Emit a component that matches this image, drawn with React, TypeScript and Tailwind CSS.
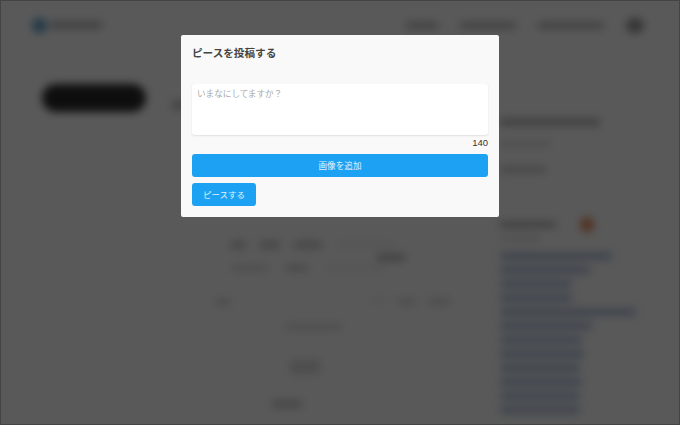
function Background() {
  return (
    <div className="absolute inset-0 flex flex-col bg-white blur-[4px]">
      <header className="flex h-[48px] items-center justify-between pl-[32px] pr-[36px] pt-[2px]">
        <div className="flex items-center gap-[3px]">
          <div className="h-[15px] w-[15px] rounded-full bg-[#5fa4cc]" />
          <div className="h-[8px] w-[52px] bg-[#bbb]" />
        </div>
        <div className="flex items-center gap-[22px]">
          <div className="h-[7px] w-[32px] bg-[#bbb]" />
          <div className="h-[7px] w-[56px] bg-[#bbb]" />
          <div className="h-[7px] w-[66px] bg-[#bbb]" />
          <div className="h-[15px] w-[18px] rounded-full bg-[#999]" />
        </div>
      </header>
      <div className="flex flex-1 overflow-hidden pl-[42px] pt-[36px]">
        <div className="w-[130px] shrink-0">
          <div className="h-[28px] w-[104px] rounded-full bg-[#2a2a2a]" />
        </div>
        <div className="w-[328px] shrink-0 pr-[20px]">
          <div className="mt-[17px] h-[8px] w-[14px] bg-[#bbb]" />
          <div className="ml-[58px] mt-[132px] flex items-center gap-[14px]">
            <div className="h-[8px] w-[16px] bg-[#ccc]" />
            <div className="h-[8px] w-[20px] bg-[#ccc]" />
            <div className="h-[8px] w-[28px] bg-[#ccc]" />
            <div className="h-[4px] w-[60px] bg-[#eee]" />
          </div>
          <div className="ml-[205px] mt-[5px] h-[7px] w-[28px] bg-[#bbb]" />
          <div className="ml-[60px] mt-[4px] flex gap-[18px]">
            <div className="h-[6px] w-[36px] bg-[#ddd]" />
            <div className="h-[6px] w-[22px] bg-[#ccc]" />
            <div className="h-[5px] w-[60px] bg-[#eee]" />
          </div>
          <div className="mt-[27px] flex justify-between pl-[44px] pr-[30px]">
            <div className="h-[8px] w-[14px] bg-[#ddd]" />
            <div className="flex gap-[12px]">
              <div className="h-[5px] w-[14px] bg-[#eee]" />
              <div className="h-[7px] w-[18px] bg-[#ddd]" />
              <div className="h-[7px] w-[22px] bg-[#ddd]" />
            </div>
          </div>
          <div className="ml-[113px] mt-[18px] h-[6px] w-[56px] bg-[#ddd]" />
          <div className="ml-[118px] mt-[30px] h-[14px] w-[30px] bg-[#ddd]" />
          <div className="ml-[100px] mt-[26px] h-[8px] w-[30px] bg-[#ccc]" />
        </div>
        <div className="w-[140px] shrink-0 pt-[34px]">
          <div className="h-[8px] w-[100px] bg-[#bbb]" />
          <div className="mt-[15px] h-[6px] w-[50px] bg-[#ddd]" />
          <div className="mt-[19px] h-[7px] w-[46px] bg-[#ccc]" />
          <div className="mt-[44px] flex items-center gap-[24px]">
            <div className="h-[7px] w-[56px] bg-[#bbb]" />
            <div className="h-[15px] w-[14px] rounded-full bg-[#e69060]" />
          </div>
          <div className="mt-[4px] h-[5px] w-[40px] bg-[#ddd]" />
          <div className="mt-[11px] flex flex-col gap-[6px]">
            <div className="h-[8px] w-[112px] bg-[#b5c5e0]" />
            <div className="h-[8px] w-[90px] bg-[#b5c5e0]" />
            <div className="h-[8px] w-[72px] bg-[#b5c5e0]" />
            <div className="h-[8px] w-[72px] bg-[#b5c5e0]" />
            <div className="h-[8px] w-[136px] bg-[#b5c5e0]" />
            <div className="h-[8px] w-[92px] bg-[#b5c5e0]" />
            <div className="h-[8px] w-[82px] bg-[#b5c5e0]" />
            <div className="h-[8px] w-[84px] bg-[#b5c5e0]" />
            <div className="h-[8px] w-[80px] bg-[#b5c5e0]" />
            <div className="h-[8px] w-[82px] bg-[#b5c5e0]" />
            <div className="h-[8px] w-[80px] bg-[#b5c5e0]" />
            <div className="h-[8px] w-[80px] bg-[#b5c5e0]" />
          </div>
        </div>
      </div>
    </div>
  );
}

export default function App() {
  return (
    <div className="relative h-[425px] w-[680px] overflow-hidden font-['Noto_Sans_CJK_JP','Liberation_Sans',sans-serif]">
      <Background />
      <div className="absolute inset-0 flex items-start justify-center border border-[#444] bg-[#000000a6] pt-[34px]">
        <div className="flex h-[182px] w-[318px] flex-col rounded-[2px] bg-[#f9f9f9] px-[11px] pt-[9px]">
          <h2 className="text-[10.6px] font-bold leading-[18px] text-[#444]">ピースを投稿する</h2>
          <div className="mt-[22px] h-[51px] rounded-[3px] bg-white px-[5px] py-[2px] text-[8.6px] leading-[15px] text-[#aaa] shadow-[0_1px_2px_rgba(0,0,0,0.1)]">
            いまなにしてますか？
          </div>
          <div className="mt-[1px] text-right font-['Liberation_Sans',sans-serif] text-[9.5px] leading-[14px] text-[#333]">140</div>
          <button className="mt-[4px] h-[23px] w-full rounded-[3px] bg-[#1da1f2] text-[8.6px] text-[#e0f2fe]">画像を追加</button>
          <button className="mt-[6px] h-[23px] w-[64px] rounded-[3px] bg-[#1da1f2] text-[8.5px] text-[#e0f2fe]">ピースする</button>
        </div>
      </div>
    </div>
  );
}
